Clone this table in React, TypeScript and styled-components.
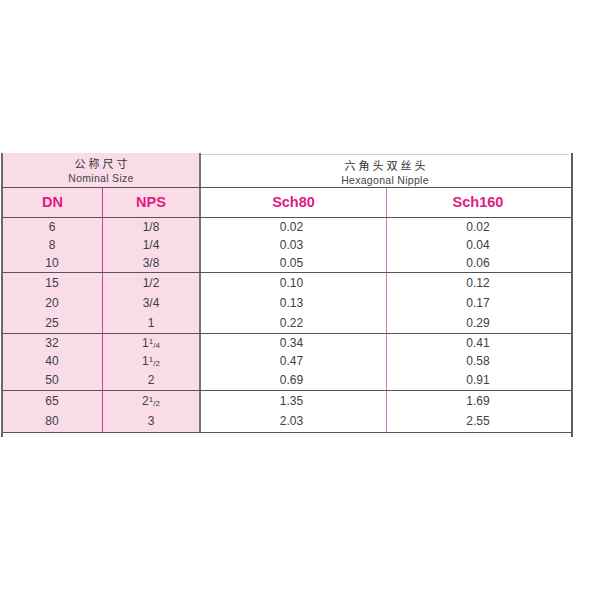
import React from "react";
import styled, { createGlobalStyle } from "styled-components";

const Global = createGlobalStyle`
  html, body { margin: 0; padding: 0; background: #ffffff; }
  body { font-family: "Liberation Sans", Arial, "Noto Sans CJK SC", sans-serif; }
`;

const PINK = "#f9dce8";
const MAGENTA = "#e2197f";
const LINE = "#555555";

const Page = styled.div`
  width: 600px;
  height: 600px;
  padding: 153px 0 0 1px;
  box-sizing: border-box;
`;

const Table = styled.div`
  width: 572px;
  box-sizing: border-box;
  border-left: 2px solid #6a6a6a;
  border-right: 2px solid #5e5e5e;
  padding-bottom: 4px;
`;

const Row = styled.div<{ $h: number }>`
  display: grid;
  grid-template-columns: 100px 98px 186px 182px;
  height: ${(p) => p.$h}px;
  box-sizing: border-box;
  border-bottom: 1px solid ${LINE};
`;

const TitleCell = styled.div<{ $pink?: boolean; $divider?: boolean }>`
  grid-column: span 2;
  display: flex;
  flex-direction: column;
  align-items: center;
  padding-top: 3px;
  box-sizing: border-box;
  background: ${(p) => (p.$pink ? PINK : "#fff")};
  border-right: ${(p) => (p.$divider ? "2px solid #747474" : "none")};
  border-top: ${(p) => (p.$pink ? "none" : "1px solid #cfcfcf")};
  margin-top: ${(p) => (p.$pink ? "0" : "1px")};
`;

const Cn = styled.div`
  font-family: "Noto Sans CJK SC", "Liberation Sans", sans-serif;
  font-size: 11px;
  line-height: 15px;
  letter-spacing: 3px;
  color: #333;
  padding-left: 3px;
`;

const En = styled.div`
  font-size: 10.5px;
  line-height: 14px;
  letter-spacing: 0.3px;
  color: #444;
`;

type Kind = "dn" | "nps" | "s80" | "s160";

const borderFor = (k: Kind) =>
  k === "dn"
    ? `1px solid #e0389a`
    : k === "nps"
    ? `2px solid #747474`
    : k === "s80"
    ? `1px solid #d27cbf`
    : "none";

const HeadCell = styled.div<{ $k: Kind }>`
  display: flex;
  align-items: center;
  justify-content: center;
  box-sizing: border-box;
  font-size: 14.5px;
  font-weight: bold;
  color: ${MAGENTA};
  background: ${(p) => (p.$k === "dn" || p.$k === "nps" ? PINK : "#fff")};
  border-right: ${(p) => borderFor(p.$k)};
  padding-bottom: 1px;
`;

const Group = styled.div<{ $h: number; $n: number }>`
  display: grid;
  grid-template-columns: 100px 98px 186px 182px;
  grid-template-rows: repeat(${(p) => p.$n}, 1fr);
  height: ${(p) => p.$h}px;
  box-sizing: border-box;
  border-bottom: 1px solid ${LINE};
`;

const Cell = styled.div<{ $k: Kind }>`
  display: flex;
  align-items: center;
  justify-content: center;
  box-sizing: border-box;
  font-size: 12px;
  color: #404040;
  background: ${(p) => (p.$k === "dn" || p.$k === "nps" ? PINK : "#fff")};
  border-right: ${(p) => borderFor(p.$k)};
  padding-right: ${(p) => (p.$k === "s80" ? "4px" : p.$k === "dn" ? "1px" : "0")};
  padding-bottom: 1px;
`;

const Sup = styled.span`
  font-size: 8px;
  position: relative;
  top: -3px;
`;

const Sub = styled.span`
  font-size: 8px;
  position: relative;
  top: 1px;
`;

const Frac = ({ w, n, d }: { w: string; n: string; d: string }) => (
  <span>
    {w}
    <Sup>{n}</Sup>
    <Sub>/{d}</Sub>
  </span>
);

type R = [string, React.ReactNode, string, string];

const groups: { h: number; rows: R[] }[] = [
  {
    h: 55,
    rows: [
      ["6", "1/8", "0.02", "0.02"],
      ["8", "1/4", "0.03", "0.04"],
      ["10", "3/8", "0.05", "0.06"],
    ],
  },
  {
    h: 61,
    rows: [
      ["15", "1/2", "0.10", "0.12"],
      ["20", "3/4", "0.13", "0.17"],
      ["25", "1", "0.22", "0.29"],
    ],
  },
  {
    h: 57,
    rows: [
      ["32", <Frac w="1" n="1" d="4" />, "0.34", "0.41"],
      ["40", <Frac w="1" n="1" d="2" />, "0.47", "0.58"],
      ["50", "2", "0.69", "0.91"],
    ],
  },
  {
    h: 42,
    rows: [
      ["65", <Frac w="2" n="1" d="2" />, "1.35", "1.69"],
      ["80", "3", "2.03", "2.55"],
    ],
  },
];

const kinds: Kind[] = ["dn", "nps", "s80", "s160"];

export default function App() {
  return (
    <Page>
      <Global />
      <Table>
        <Row $h={35}>
          <TitleCell $pink $divider>
            <Cn>公称尺寸</Cn>
            <En>Nominal Size</En>
          </TitleCell>
          <TitleCell>
            <Cn>六角头双丝头</Cn>
            <En>Hexagonal Nipple</En>
          </TitleCell>
        </Row>
        <Row $h={30}>
          <HeadCell $k="dn">DN</HeadCell>
          <HeadCell $k="nps">NPS</HeadCell>
          <HeadCell $k="s80">Sch80</HeadCell>
          <HeadCell $k="s160">Sch160</HeadCell>
        </Row>
        {groups.map((g, gi) => (
          <Group key={gi} $h={g.h} $n={g.rows.length}>
            {g.rows.map((r, ri) =>
              r.map((v, ci) => (
                <Cell key={`${ri}-${ci}`} $k={kinds[ci]}>
                  {v}
                </Cell>
              ))
            )}
          </Group>
        ))}
      </Table>
    </Page>
  );
}
